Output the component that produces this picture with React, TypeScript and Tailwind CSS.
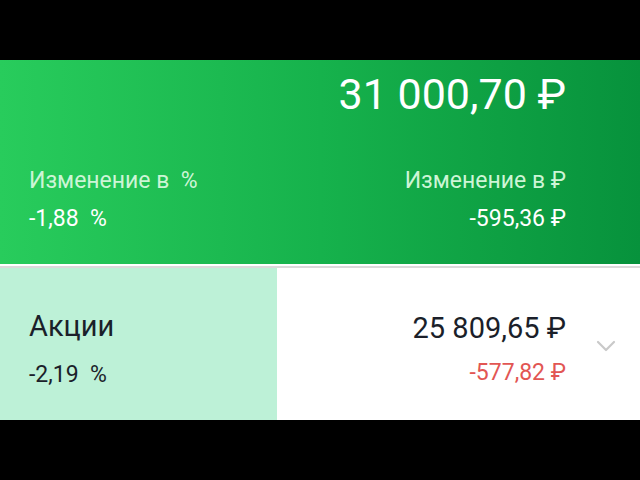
export default function App() {
  return (
    <div className="w-[640px] h-[480px] bg-black overflow-hidden" style={{ fontFamily: 'Roboto, "Noto Sans", sans-serif' }}>
      <div className="h-[60px]" />
      <div className="h-[204px] bg-gradient-to-r from-[#28cc5c] via-[#16b24c] to-[#07923c] flex flex-col px-[29px] pr-[74px]">
        <div className="flex justify-end pt-[9px]">
          <span className="text-[43px] leading-[50px] text-white">31 000,70 ₽</span>
        </div>
        <div className="flex justify-between mt-[48px]">
          <div className="flex flex-col">
            <span className="text-[23px] leading-[28px] text-[#cdf5d6]">Изменение в&nbsp;&nbsp;%</span>
            <span className="text-[23px] leading-[28px] text-white mt-[10px]">-1,88&nbsp;&nbsp;%</span>
          </div>
          <div className="flex flex-col items-end">
            <span className="text-[23px] leading-[28px] text-[#cdf5d6]">Изменение в ₽</span>
            <span className="text-[23px] leading-[28px] text-white mt-[10px]">-595,36 ₽</span>
          </div>
        </div>
      </div>
      <div className="h-[2px] bg-white" />
      <div className="h-[2px] bg-[#dadada]" />
      <div className="h-[152px] flex">
        <div className="w-[277px] bg-[#bdf1d7] flex flex-col pl-[29px] pt-[41px]">
          <span className="text-[29px] leading-[34px] text-[#1b1f2a]">Акции</span>
          <span className="text-[23px] leading-[28px] text-[#1b1f2a] mt-[18px]">-2,19&nbsp;&nbsp;%</span>
        </div>
        <div className="flex-1 bg-white flex items-start">
          <div className="flex-1 flex flex-col items-end pr-[10px] pt-[43px]">
            <span className="text-[29px] leading-[34px] text-[#1b1f2a]">25 809,65 ₽</span>
            <span className="text-[23px] leading-[28px] text-[#e25653] mt-[14px]">-577,82 ₽</span>
          </div>
          <div className="w-[64px] flex justify-center pr-[4px] pt-[72px]">
            <svg width="20" height="12" viewBox="0 0 20 12" fill="none">
              <path d="M2 2 L10 10 L18 2" stroke="#c9c9c9" strokeWidth="2.2" strokeLinecap="round" strokeLinejoin="round" />
            </svg>
          </div>
        </div>
      </div>
    </div>
  );
}
